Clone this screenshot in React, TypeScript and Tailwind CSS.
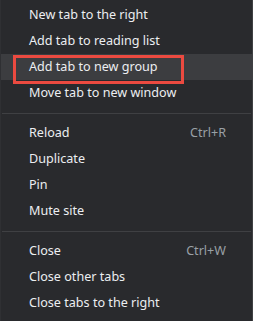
import React from "react";

type Item = { label: string; shortcut?: string; highlight?: boolean };

const groups: Item[][] = [
  [
    { label: "New tab to the right" },
    { label: "Add tab to reading list" },
    { label: "Add tab to new group", highlight: true },
    { label: "Move tab to new window" },
  ],
  [
    { label: "Reload", shortcut: "Ctrl+R" },
    { label: "Duplicate" },
    { label: "Pin" },
    { label: "Mute site" },
  ],
  [
    { label: "Close", shortcut: "Ctrl+W" },
    { label: "Close other tabs" },
    { label: "Close tabs to the right" },
  ],
];

function Row({ item }: { item: Item }) {
  return (
    <div
      className={`relative flex h-[26px] items-center justify-between pl-[28px] pr-[26px] ${
        item.highlight ? "bg-[#3c3d40]" : ""
      }`}
    >
      <span className="text-[12.6px] text-[#eceef1]">{item.label}</span>
      {item.shortcut && (
        <span className="text-[12.6px] text-[#9aa0a6]">{item.shortcut}</span>
      )}
      {item.highlight && (
        <div className="pointer-events-none absolute left-[12px] top-[1px] h-[29px] w-[171px] border-[3px] border-[#eb4a40]" />
      )}
    </div>
  );
}

export default function App() {
  return (
    <div
      className="h-[321px] w-[253px] overflow-hidden border-l border-r border-l-[#2f3033] border-r-[#3f4043] bg-[#292a2d] pt-[2px]"
      style={{ fontFamily: '"Noto Sans", "Open Sans", sans-serif' }}
    >
      {groups.map((g, gi) => (
        <div key={gi}>
          {gi > 0 && (
            <div className="mb-[6px] mt-[7px] ml-[1px] mr-[1px] h-px bg-[#3f4043]" />
          )}
          {g.map((it) => (
            <Row key={it.label} item={it} />
          ))}
        </div>
      ))}
    </div>
  );
}
